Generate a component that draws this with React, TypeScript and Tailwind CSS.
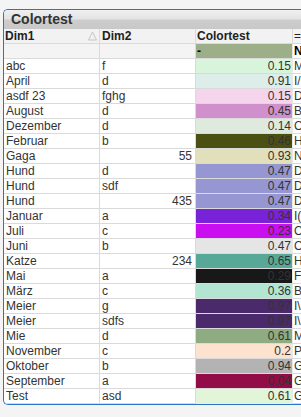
import React from 'react';

type Row = { d1: string; d2: string; num?: boolean; v: string; bg: string; n: string };

const rows: Row[] = [
  { d1: 'abc', d2: 'f', v: '0.15', bg: '#d8f5dc', n: 'M' },
  { d1: 'April', d2: 'd', v: '0.91', bg: '#dcedea', n: 'I/' },
  { d1: 'asdf 23', d2: 'fghg', v: '0.15', bg: '#f5d5ec', n: 'D' },
  { d1: 'August', d2: 'd', v: '0.45', bg: '#cf90cc', n: 'Bl' },
  { d1: 'Dezember', d2: 'd', v: '0.14', bg: '#dfeade', n: 'O' },
  { d1: 'Februar', d2: 'b', v: '0.46', bg: '#4b4f12', n: 'H' },
  { d1: 'Gaga', d2: '55', num: true, v: '0.93', bg: '#e2dfbb', n: 'N' },
  { d1: 'Hund', d2: 'd', v: '0.47', bg: '#9596d2', n: 'D' },
  { d1: 'Hund', d2: 'sdf', v: '0.47', bg: '#9596d2', n: 'D' },
  { d1: 'Hund', d2: '435', num: true, v: '0.47', bg: '#9596d2', n: 'D' },
  { d1: 'Januar', d2: 'a', v: '0.34', bg: '#7823d8', n: 'I(' },
  { d1: 'Juli', d2: 'c', v: '0.23', bg: '#c90ef0', n: 'O' },
  { d1: 'Juni', d2: 'b', v: '0.47', bg: '#e5e5e5', n: 'O' },
  { d1: 'Katze', d2: '234', num: true, v: '0.65', bg: '#58a898', n: 'H' },
  { d1: 'Mai', d2: 'a', v: '0.29', bg: '#181818', n: 'F' },
  { d1: 'März', d2: 'c', v: '0.36', bg: '#b3e5d3', n: "B'" },
  { d1: 'Meier', d2: 'g', v: '0.97', bg: '#4a2a6a', n: 'I\\' },
  { d1: 'Meier', d2: 'sdfs', v: '0.97', bg: '#4a2a6a', n: 'I\\' },
  { d1: 'Mie', d2: 'd', v: '0.61', bg: '#8eab82', n: 'M' },
  { d1: 'November', d2: 'c', v: '0.2', bg: '#fde2d0', n: 'P' },
  { d1: 'Oktober', d2: 'b', v: '0.94', bg: '#b3b3b3', n: 'G' },
  { d1: 'September', d2: 'a', v: '0.04', bg: '#920c48', n: 'G' },
  { d1: 'Test', d2: 'asd', v: '0.61', bg: '#e2f5d8', n: 'G' },
];

const cell = 'h-[15px] border-b border-r border-[#dadada] leading-[14px] overflow-hidden whitespace-nowrap';

export default function App() {
  return (
    <div
      className="w-[301px] h-[417px] overflow-hidden bg-[#f4f4f4] pt-[9px] pl-[3px] text-[12px] text-[#333]"
      style={{ fontFamily: '"Liberation Sans", Arial, sans-serif' }}
    >
      <div className="w-[320px] rounded-tl-[5px] rounded-bl-[5px] border-t border-l border-b border-[#2b74c6] bg-white overflow-hidden">
        {/* Caption */}
        <div className="h-[19px] pl-[7px] leading-[19px] text-[14px] font-bold text-[#333] bg-[linear-gradient(to_bottom,#f0f0f0_0%,#e4e4e4_45%,#cdcdcd_55%,#c8c8c8_100%)]">
          Colortest
        </div>

        {/* Header */}
        <div className="flex bg-[#f2f2f2] font-bold text-[#222]">
          <div className={`${cell} w-[96px] pl-[1px] relative`}>
            Dim1
            <svg className="absolute right-[2px] top-[2px]" width="9" height="10" viewBox="0 0 9 10">
              <path d="M4.5 1 L8.5 9 L0.5 9 Z" fill="none" stroke="#c4c4c4" strokeWidth="1" />
            </svg>
          </div>
          <div className={`${cell} w-[96px] pl-[2px]`}>Dim2</div>
          <div className={`${cell} w-[97px] pl-[1px]`}>Colortest</div>
          <div className={`${cell} flex-1 pl-[1px] font-normal`}>=</div>
        </div>

        {/* Totals */}
        <div className="flex bg-[#f4f4f4] font-bold text-black">
          <div className={`${cell} w-[96px]`}></div>
          <div className={`${cell} w-[96px]`}></div>
          <div className={`${cell} w-[97px] pl-[1px] bg-[#9caf88] border-r-[#e8e8e8]`}>-</div>
          <div className={`${cell} flex-1 pl-[1px] bg-white`}>N</div>
        </div>

        {/* Rows */}
        {rows.map((r, i) => (
          <div key={i} className="flex">
            <div className={`${cell} w-[96px] pl-[2px]`}>{r.d1}</div>
            <div className={`${cell} w-[96px] ${r.num ? 'text-right pr-[3px]' : 'pl-[2px]'}`}>{r.d2}</div>
            <div
              className={`${cell} w-[97px] text-right pr-[1px] border-r-[#e8e8e8] ${i === rows.length - 1 ? 'border-b-0' : ''}`}
              style={{ backgroundColor: r.bg }}
            >
              {r.v}
            </div>
            <div className={`${cell} flex-1 pl-[1px]`}>{r.n}</div>
          </div>
        ))}
      </div>
    </div>
  );
}
